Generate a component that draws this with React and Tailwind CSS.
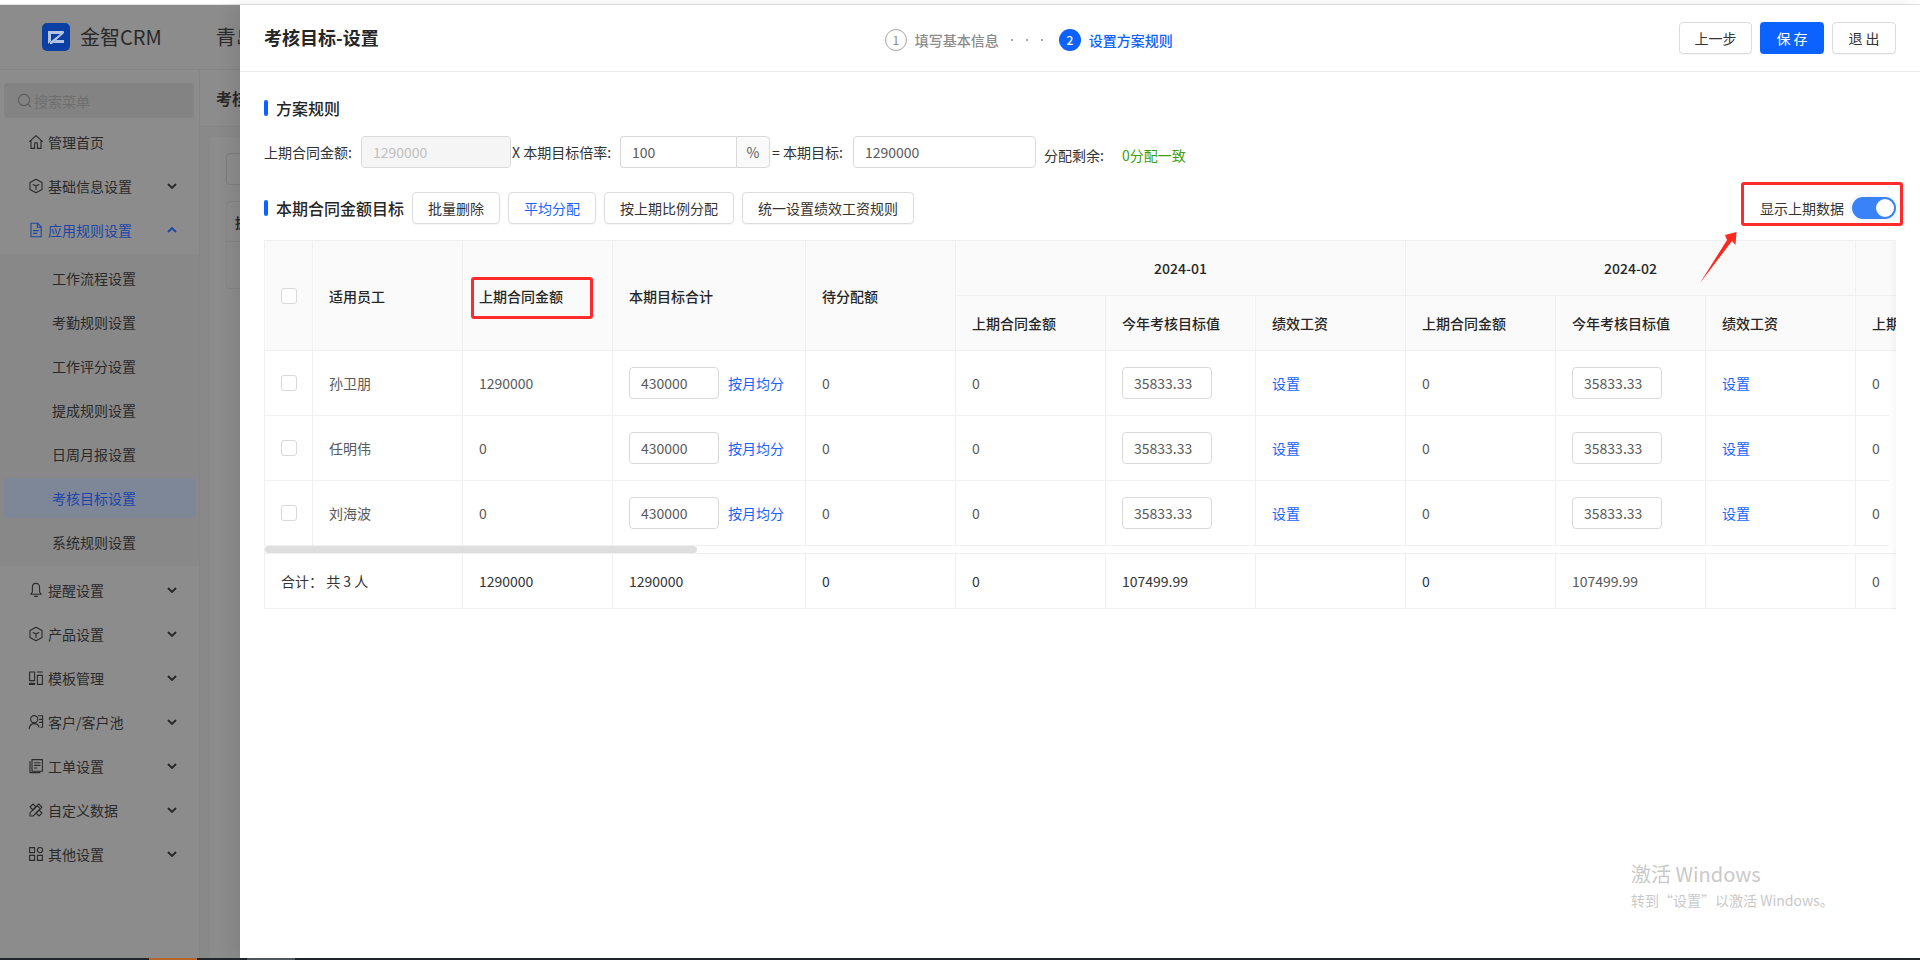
import React from "react";

const S = ({ children, className = "" }) => (
  <svg viewBox="0 0 16 16" fill="none" stroke="currentColor" strokeWidth="1.1" strokeLinejoin="round" strokeLinecap="round" className={"w-4 h-4 shrink-0 " + className}>
    {children}
  </svg>
);
const Home = () => <S><path d="M1.5 7.6 8 1.6l6.5 6M3 6.4V14.4h3.600V10a1.400 1.400 0 0 1 2.800 0v4.400H13V6.400" /></S>;
const Cube = () => <S><path d="M8 1.2 14 4.600v6.800L8 14.800 2 11.400V4.600Z" /><path d="M5.200 6.400 8 8l2.800-1.600M8 8v3.400" /></S>;
const Doc = () => <S><path d="M3 1.200h6.600L13.200 5v9.800H3Z" /><path d="M9.400 1.400V5.200h3.600M5.400 8.600h5M5.400 11.400h3.400" /></S>;
const Bell = () => <S><path d="M8 1.400c-2.400 0-3.600 1.900-3.600 4v4.200c0 1-.8 2-1.600 2.600h10.400c-.8-.6-1.600-1.600-1.600-2.600V5.400c0-2.100-1.200-4-3.600-4Z" /><path d="M6.600 14.400h2.800" /></S>;
const Tpl = () => <S><path d="M1.600 2h5v8.600h-5ZM9.400 2H14.400M9.400 5.400h5v9h-5ZM1.600 13.400h5v1h-5Z" /></S>;
const Cust = () => <S><circle cx="6.200" cy="5.200" r="3.600" /><path d="M1.200 14.600c.4-3 2.400-5 5-5s4.200 1.600 4.800 3.400M10.400 1.800h4.200v11.400h-1.800M11.600 5.400h3M11.600 8.400h3" /></S>;
const Order = () => <S><path d="M4 1.600h10.400v11.600H4ZM2 3.600v11h10" /><path d="M6.400 4.800h5.600M6.400 7.400h5.600M6.400 10h2.600" /></S>;
const Tools = () => <S><path d="m2 10.800 8.800-8.800 3.200 3.200-8.800 8.800H2ZM9.200 3.600l3.200 3.200" /><path d="M2 5 5 2l3 3-3 3ZM11 8l3 3-3 3-3-3Z" /></S>;
const Apps = () => <S><rect x="1.600" y="1.600" width="5" height="5" /><rect x="1.600" y="9.400" width="5" height="5" /><rect x="9.400" y="9.400" width="5" height="5" /><circle cx="12" cy="4.100" r="2.600" /></S>;

const Chevron = () => (
  <svg viewBox="0 0 10 6" fill="none" stroke="currentColor" strokeWidth="1.800" className="w-[10px] h-[6px]">
    <path d="M1 1l4 4 4-4" />
  </svg>
);

const Top = ({ icon, label, open, active }) => (
  <div className={"flex items-center h-[44px] pl-[28px] pr-[22px] text-sm " + (active ? "text-[#1c46a8]" : "text-[#2a2a2a]")}>
    {icon}
    <span className="ml-1 flex-1">{label}</span>
    {open !== undefined && <span className={open ? "rotate-180 text-[#1c46a8]" : "text-[#262626]"}><Chevron /></span>}
  </div>
);

const subs = ["工作流程设置", "考勤规则设置", "工作评分设置", "提成规则设置", "日周月报设置", "考核目标设置", "系统规则设置"];

function Sidebar() {
  return (
    <aside className="w-[200px] shrink-0 bg-[#8c8c8c] border-r border-[#858585]">
      <div className="ml-1 mr-[5px] mt-[13px] mb-[2px] h-[35px] rounded-sm bg-[#838383] flex items-center pl-[13px] text-sm text-[#6f6f6f]">
        <svg viewBox="0 0 16 16" fill="none" stroke="#5f5f5f" strokeWidth="1.200" className="w-[15px] h-[15px] mr-[2px]">
          <circle cx="7.500" cy="7.500" r="6" /><path d="m12 12 3 3" />
        </svg>
        搜索菜单
      </div>
      <Top icon={<Home />} label="管理首页" />
      <Top icon={<Cube />} label="基础信息设置" open={false} />
      <Top icon={<Doc />} label="应用规则设置" open={true} active />
      <div className="my-[2px] py-1 flex flex-col gap-1 bg-[#888888]">
        {subs.map((s) => (
          <div key={s} className={"h-10 mx-1 rounded flex items-center pl-[48px] text-sm " + (s === "考核目标设置" ? "bg-[#7d8798] text-[#1c46a8]" : "text-[#2a2a2a]")}>{s}</div>
        ))}
      </div>
      <Top icon={<Bell />} label="提醒设置" open={false} />
      <Top icon={<Cube />} label="产品设置" open={false} />
      <Top icon={<Tpl />} label="模板管理" open={false} />
      <Top icon={<Cust />} label="客户/客户池" open={false} />
      <Top icon={<Order />} label="工单设置" open={false} />
      <Top icon={<Tools />} label="自定义数据" open={false} />
      <Top icon={<Apps />} label="其他设置" open={false} />
    </aside>
  );
}

function Backdrop() {
  return (
    <div className="w-[240px] shrink-0 bg-[#8c8c8c] overflow-hidden flex flex-col">
      <div className="h-[65px] shrink-0 border-b border-[#858585] flex items-center whitespace-nowrap">
        <svg viewBox="0 0 28 28" className="ml-[42px] w-[28px] h-[28px] shrink-0">
          <rect width="28" height="28" rx="5" fill="#0b3fa3" />
          <path d="M6 8h16l-3 3H9v7l-3 3Z" fill="#b4c4e2" />
          <path d="M22 8v2L10 21H8v-2Z" fill="#b4c4e2" />
          <path d="M22 20H11l3-3h8Z" fill="#b4c4e2" />
        </svg>
        <span className="ml-[10px] text-[20px] text-[#2a2a2a]">金智CRM</span>
        <span className="ml-[54px] text-[20px] text-[#2a2a2a]">青岛金智</span>
      </div>
      <div className="flex flex-1 min-h-0">
        <Sidebar />
        <div className="flex-1 bg-[#898989] flex flex-col whitespace-nowrap">
          <div className="h-[57px] shrink-0 bg-[#8c8c8c] border-b border-[#858585] flex items-center pl-4 font-bold text-base text-[#2a2a2a]">考核目标</div>
          <div className="mt-[10px] ml-[10px] flex-1 bg-[#8c8c8c] pl-4 pt-4">
            <div className="h-8 w-[60px] border border-[#7d7d7d] rounded" />
            <div className="mt-4 h-[88px] w-[60px] border border-[#858585] rounded-sm">
              <div className="h-10 pl-2 flex items-center font-bold text-sm text-[#2a2a2a] border-b border-[#858585]">提成</div>
            </div>
          </div>
        </div>
      </div>
    </div>
  );
}

const Btn = ({ children, className = "text-[#333]" }) => (
  <button className={"h-8 px-[15px] border border-[#dcdcdc] bg-white rounded text-sm whitespace-nowrap shadow-[0_1px_1px_rgba(0,0,0,0.04)] " + className}>{children}</button>
);

const Inp = ({ value, className = "", disabled }) => (
  <input readOnly value={value} className={"h-8 border border-[#d9d9d9] rounded px-[11px] text-sm outline-none " + (disabled ? "bg-[#f5f5f5] text-[#bfbfbf] " : "bg-white text-[#595959] ") + className} />
);

const widths = [48, 150, 150, 193, 150, 150, 150, 150, 150, 150, 150, 150, 150];
const Cols = () => (
  <colgroup>
    {widths.map((w, i) => <col key={i} style={{ width: w }} />)}
  </colgroup>
);

const thBase = "border-r border-b border-[#f0f0f0] bg-[#fafafa] text-sm font-medium text-[#262626] align-middle";
const th = thBase + " px-4 text-left";
const thC = thBase + " text-center";
const td = "border-r border-b border-[#f0f0f0] px-4 text-sm text-[#595959] align-middle";
const Check = () => <span className="block w-4 h-4 rounded-[3px] border border-[#d9d9d9] bg-white" />;
const A = ({ children }) => <span className="text-sm text-[#1664ff] whitespace-nowrap">{children}</span>;

function DataTable() {
  const people = [["孙卫朋", "1290000"], ["任明伟", "0"], ["刘海波", "0"]];
  return (
    <div className="relative w-[1632px] overflow-hidden border-t border-l border-[#f0f0f0]">
      <table className="table-fixed border-separate border-spacing-0 w-[1891px]">
        <Cols />
        <thead>
          <tr className="h-[55px]">
            <th rowSpan={2} className={thC}><span className="flex justify-center"><Check /></span></th>
            <th rowSpan={2} className={th}>适用员工</th>
            <th rowSpan={2} className={th}>上期合同金额</th>
            <th rowSpan={2} className={th}>本期目标合计</th>
            <th rowSpan={2} className={th}>待分配额</th>
            <th colSpan={3} className={thC}>2024-01</th>
            <th colSpan={3} className={thC}>2024-02</th>
            <th colSpan={2} className={thC}>2024-03</th>
          </tr>
          <tr className="h-[55px]">
            {["上期合同金额", "今年考核目标值", "绩效工资", "上期合同金额", "今年考核目标值", "绩效工资", "上期合同金额", "今年考核目标值"].map((t, i) => (
              <th key={i} className={th}>{t}</th>
            ))}
          </tr>
        </thead>
        <tbody>
          {people.map(([n, v]) => (
            <tr key={n} className="h-[65px]">
              <td className="border-r border-b border-[#f0f0f0] align-middle"><span className="flex justify-center"><Check /></span></td>
              <td className={td + " text-[#333]"}>{n}</td>
              <td className={td}>{v}</td>
              <td className={td}>
                <span className="flex items-center gap-[9px]"><Inp value="430000" className="w-[90px]" /><A>按月均分</A></span>
              </td>
              <td className={td}>0</td>
              {[0, 1].map((k) => (
                <React.Fragment key={k}>
                  <td className={td}>0</td>
                  <td className={td}><Inp value="35833.33" className="w-[90px]" /></td>
                  <td className={td}><A>设置</A></td>
                </React.Fragment>
              ))}
              <td className={td}>0</td>
              <td className={td}><Inp value="35833.33" className="w-[90px]" /></td>
            </tr>
          ))}
        </tbody>
      </table>
      <div className="h-2 flex items-start border-b border-[#f0f0f0]">
        <div className="w-[432px] h-[7px] rounded bg-[#dedede]" />
      </div>
      <table className="table-fixed border-separate border-spacing-0 w-[1891px]">
        <Cols />
        <tbody>
          <tr className="h-[55px]">
            <td colSpan={2} className={td + " !text-[#333]"}>合计： 共 3 人</td>
            <td className={td + " !text-[#333]"}>1290000</td>
            <td className={td + " !text-[#333]"}>1290000</td>
            <td className={td + " !text-[#1f3557]"}>0</td>
            <td className={td + " !text-[#333]"}>0</td>
            <td className={td + " !text-[#333]"}>107499.99</td>
            <td className={td}></td>
            <td className={td + " !text-[#1f3557]"}>0</td>
            <td className={td}>107499.99</td>
            <td className={td}></td>
            <td className={td}>0</td>
            <td className={td}></td>
          </tr>
        </tbody>
      </table>
      <div className="absolute right-0 top-0 bottom-0 w-[7px] bg-gradient-to-r from-black/0 to-black/[0.03]" />
      <div className="absolute right-0 top-[111px] h-[195px] w-[7px] bg-gradient-to-r from-white to-[#f8f8f8]" />
    </div>
  );
}

function Drawer() {
  return (
    <section className="relative z-10 flex-1 bg-white shadow-[-8px_0_16px_rgba(0,0,0,0.08)]">
      <header className="h-[67px] border-b border-[#ececec] pl-6 pr-6 flex items-center justify-between">
        <h1 className="text-[18px] font-semibold text-[#262626] leading-none mb-[3px]">考核目标-设置</h1>
        <div className="flex items-center text-sm font-medium mt-[3px]">
          <span className="w-[22px] h-[22px] rounded-full border border-[#a6a6a6] text-[#8c8c8c] text-xs font-normal flex items-center justify-center">1</span>
          <span className="ml-2 text-[#8c8c8c]">填写基本信息</span>
          <span className="ml-[12px] flex gap-[13px]">
            <i className="block w-[2px] h-[2px] rounded-full bg-[#8c8c8c]" />
            <i className="block w-[2px] h-[2px] rounded-full bg-[#8c8c8c]" />
            <i className="block w-[2px] h-[2px] rounded-full bg-[#8c8c8c]" />
          </span>
          <span className="ml-4 w-[22px] h-[22px] rounded-full bg-[#0c62ff] text-white text-xs flex items-center justify-center">2</span>
          <span className="ml-2 text-[#0c62ff]">设置方案规则</span>
        </div>
        <div className="flex gap-2">
          <Btn className="text-[#333] w-[73px] !px-0">上一步</Btn>
          <button className="h-8 w-16 rounded bg-[#0c62ff] text-white text-sm">保 存</button>
          <Btn className="text-[#333] w-16 !px-0">退 出</Btn>
        </div>
      </header>
      <div className="pl-6 pr-6 pt-6">
        <div className="h-6 flex items-center">
          <i className="block w-1 h-4 bg-[#0c62ff] rounded-sm" />
          <h2 className="ml-2 text-base font-medium text-[#262626]">方案规则</h2>
        </div>
        <div className="mt-4 flex items-center text-sm text-[#333] whitespace-nowrap">
          <span className="w-[97px]">上期合同金额:</span>
          <Inp value="1290000" disabled className="w-[150px]" />
          <span className="w-[109px] pl-[1px]">X 本期目标倍率:</span>
          <Inp value="100" className="w-[116px] rounded-r-none border-r-0" />
          <span className="w-[34px] h-8 border border-[#d9d9d9] rounded-r bg-[#fafafa] flex items-center justify-center text-[#595959]">%</span>
          <span className="w-[83px] pl-[2px]">= 本期目标:</span>
          <Inp value="1290000" className="w-[183px]" />
          <span className="ml-2 w-[78px] mt-[6px]">分配剩余:</span>
          <span className="mt-[6px] text-[#389e0d]">0分配一致</span>
        </div>
        <div className="mt-6 flex items-center whitespace-nowrap">
          <i className="block w-1 h-4 bg-[#0c62ff] rounded-sm" />
          <h2 className="ml-2 text-base font-medium text-[#262626]">本期合同金额目标</h2>
          <div className="ml-2 flex gap-2">
            <Btn>批量删除</Btn>
            <Btn className="text-[#1664ff]">平均分配</Btn>
            <Btn>按上期比例分配</Btn>
            <Btn>统一设置绩效工资规则</Btn>
          </div>
          <div className="ml-auto flex items-center gap-2 text-sm text-[#333]">
            显示上期数据
            <span className="w-[44px] h-[22px] rounded-full bg-[#3a82f8] flex justify-end items-center p-[2px] shadow-[0_0_0_3px_#f6f8ff]">
              <i className="block w-[18px] h-[18px] rounded-full bg-white" />
            </span>
          </div>
        </div>
        <div className="mt-4"><DataTable /></div>
      </div>
    </section>
  );
}

export default function App() {
  return (
    <div className="relative w-[1920px] h-[960px] overflow-hidden flex flex-col bg-white font-['Noto_Sans_CJK_SC','Noto_Sans',sans-serif]">
      <div className="h-[5px] shrink-0 bg-white border-b border-[#e3e3e3]" />
      <div className="flex-1 min-h-0 flex">
        <Backdrop />
        <Drawer />
      </div>
      <div className="h-[2px] shrink-0 bg-[#22262b] flex">
        <i className="block ml-[149px] w-[48px] bg-[#b5652a]" />
        <i className="block ml-[50px] w-[48px] bg-[#555a60]" />
      </div>

      <div className="absolute left-[471px] top-[277px] w-[122px] h-[42px] border-[3px] border-[#ff2a2a] rounded-[3px] z-20" />
      <div className="absolute left-[1741px] top-[182px] w-[162px] h-[44px] border-[3px] border-[#ff2a2a] rounded-[3px] z-20" />
      <svg viewBox="1690 225 60 65" className="absolute left-[1690px] top-[225px] w-[60px] h-[65px] z-20">
        <polygon points="1700,283 1727,240 1725,235 1736.5,232 1735.5,245 1732,241" fill="#fb2a1f" />
      </svg>
      <div className="absolute left-[1631px] top-[860px] z-20 text-[#c9c9c9] leading-none whitespace-nowrap">
        <div className="text-[20px] h-[28px] flex items-center">激活 Windows</div>
        <div className="text-sm mt-[2px] h-[20px] flex items-center">转到“设置”以激活 Windows。</div>
      </div>
    </div>
  );
}
